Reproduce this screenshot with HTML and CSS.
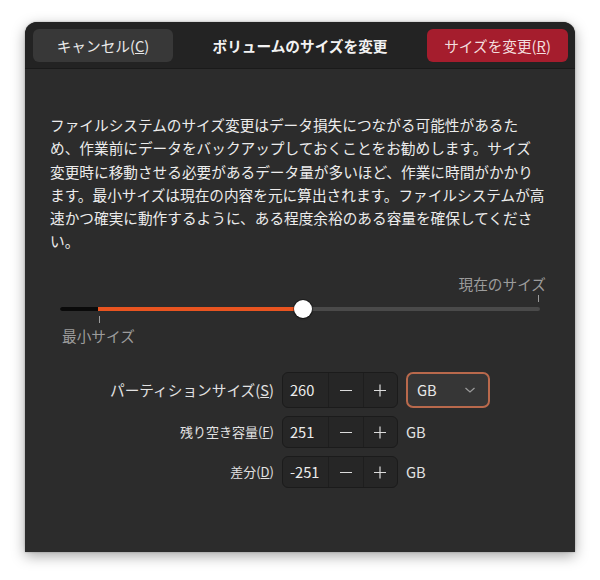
FILE: index.html
```html
<!DOCTYPE html>
<html lang="ja">
<head>
<meta charset="utf-8">
<title>ボリュームのサイズを変更</title>
<link rel="stylesheet" href="styles.css">
</head>
<body>
<div class="window">
  <header class="headerbar">
    <button class="btn btn-cancel">キャンセル(<u>C</u>)</button>
    <div class="title">ボリュームのサイズを変更</div>
    <button class="btn btn-destructive">サイズを変更(<u>R</u>)</button>
  </header>
  <main class="content">
    <p class="desc">ファイルシステムのサイズ変更はデータ損失につながる可能性があるた<br>め、作業前にデータをバックアップしておくことをお勧めします。サイズ<br>変更時に移動させる必要があるデータ量が多いほど、作業に時間がかかり<br>ます。最小サイズは現在の内容を元に算出されます。ファイルシステムが高<br>速かつ確実に動作するように、ある程度余裕のある容量を確保してくださ<br>い。</p>

    <div class="scale">
      <span class="mark-label mark-top">現在のサイズ</span>
      <span class="tick tick-top"></span>
      <div class="track">
        <div class="seg seg-min" style="width:38px"></div>
        <div class="seg seg-fill" style="width:205px"></div>
      </div>
      <span class="knob"></span>
      <span class="tick tick-bottom"></span>
      <span class="mark-label mark-bottom">最小サイズ</span>
    </div>

    <div class="form">
      <label class="lbl lbl-main">パーティションサイズ(<u>S</u>)</label>
      <div class="spin">
        <span class="spin-value">260</span>
        <span class="spin-btn"><svg width="14" height="14" viewBox="0 0 14 14"><path d="M1 7.5h12" stroke="#dcdcdc" stroke-width="1.2"/></svg></span>
        <span class="spin-btn"><svg width="14" height="14" viewBox="0 0 14 14"><path d="M1 7.5h12M7 1.5v12" stroke="#dcdcdc" stroke-width="1.2"/></svg></span>
      </div>
      <div class="dropdown">
        <span>GB</span>
        <svg width="12" height="8" viewBox="0 0 12 8"><path d="M1.5 2l4.5 4 4.5-4" fill="none" stroke="#9a9a9a" stroke-width="1.3"/></svg>
      </div>

      <label class="lbl">残り空き容量(<u>F</u>)</label>
      <div class="spin">
        <span class="spin-value">251</span>
        <span class="spin-btn"><svg width="14" height="14" viewBox="0 0 14 14"><path d="M1 7.5h12" stroke="#dcdcdc" stroke-width="1.2"/></svg></span>
        <span class="spin-btn"><svg width="14" height="14" viewBox="0 0 14 14"><path d="M1 7.5h12M7 1.5v12" stroke="#dcdcdc" stroke-width="1.2"/></svg></span>
      </div>
      <span class="unit">GB</span>

      <label class="lbl">差分(<u>D</u>)</label>
      <div class="spin">
        <span class="spin-value">-251</span>
        <span class="spin-btn"><svg width="14" height="14" viewBox="0 0 14 14"><path d="M1 7.5h12" stroke="#dcdcdc" stroke-width="1.2"/></svg></span>
        <span class="spin-btn"><svg width="14" height="14" viewBox="0 0 14 14"><path d="M1 7.5h12M7 1.5v12" stroke="#dcdcdc" stroke-width="1.2"/></svg></span>
      </div>
      <span class="unit">GB</span>
    </div>
  </main>
</div>
</body>
</html>
```
FILE: styles.css
```css
* { box-sizing: border-box; }

html, body {
  margin: 0;
  padding: 0;
  background: #ffffff;
  width: 600px;
  height: 580px;
  overflow: hidden;
}

body {
  font-family: "Noto Sans CJK JP", "Noto Sans", sans-serif;
  color: #e6e6e6;
  font-size: 14.67px;
}

.window {
  margin: 22px 0 0 25px;
  width: 550px;
  height: 530px;
  background: #2c2c2c;
  border-radius: 12px 12px 0 0;
  box-shadow: 0 4px 14px rgba(0, 0, 0, 0.35), 0 0 2px rgba(0, 0, 0, 0.3);
  display: flex;
  flex-direction: column;
  overflow: hidden;
}

.headerbar {
  height: 47px;
  flex: none;
  background: #232323;
  border-bottom: 1px solid #1a1a1a;
  display: flex;
  align-items: center;
  justify-content: space-between;
  padding: 0 7px 0 8px;
}

.btn {
  height: 33px;
  border: none;
  border-radius: 6px;
  font-family: inherit;
  font-size: 14.67px;
  padding: 0;
  line-height: 33px;
}

.btn-cancel {
  width: 140px;
  background: #383838;
  color: #e8e8e8;
}

.btn-destructive {
  width: 141px;
  background: #a51d2d;
  color: #f3dede;
}

.title {
  font-weight: 700;
  font-size: 14.67px;
  color: #f2f2f2;
}

.content {
  padding: 44px 25px 0 25px;
}

.desc {
  margin: 0;
  line-height: 23.3px;
  white-space: nowrap;
  color: #ececec;
}

.scale {
  position: relative;
  margin-top: 17px;
  height: 80px;
}

.mark-label {
  position: absolute;
  line-height: 20px;
  color: #9c9c9c;
  white-space: nowrap;
}

.mark-top { right: 4px; top: 4px; }
.mark-bottom { left: 12px; top: 56px; }

.tick {
  position: absolute;
  width: 1px;
  height: 7px;
  background: #9c9c9c;
}

.tick-top { left: 488px; top: 25px; }
.tick-bottom { left: 49px; top: 46px; }

.track {
  position: absolute;
  left: 10px;
  top: 37px;
  width: 480px;
  height: 4px;
  border-radius: 2px;
  background: #4a4a4a;
  display: flex;
  overflow: hidden;
}

.seg { height: 100%; }
.seg-min { background: #0a0a0a; }
.seg-fill { background: #e95420; }

.knob {
  position: absolute;
  left: 244px;
  top: 30px;
  width: 18px;
  height: 18px;
  border-radius: 50%;
  background: #ffffff;
  box-shadow: 0 0 0 1px rgba(0, 0, 0, 0.35), 0 1px 2px rgba(0, 0, 0, 0.4);
}

.form {
  margin-top: 22px;
  display: grid;
  grid-template-columns: auto 116px auto;
  grid-auto-rows: auto;
  column-gap: 8px;
  row-gap: 8px;
  justify-content: center;
  align-items: stretch;
}

.lbl {
  font-size: 13px;
  color: #e2e2e2;
  text-align: right;
  align-self: center;
  white-space: nowrap;
}

.lbl-main { font-size: 14.67px; }

.spin {
  display: flex;
  min-height: 32px;
  background: #262626;
  border: 1px solid #1b1b1b;
  border-radius: 6px;
  overflow: hidden;
}

.spin-value {
  width: 45px;
  flex: none;
  display: flex;
  align-items: center;
  padding-left: 7px;
  color: #ececec;
  font-size: 14.67px;
}

.spin-btn {
  width: 35px;
  flex: none;
  border-left: 1px solid #1e1e1e;
  display: flex;
  align-items: center;
  justify-content: center;
}

.spin-btn:last-child { width: 34px; }

.dropdown {
  width: 84px;
  height: 36px;
  border: 2px solid #b9694c;
  border-radius: 7px;
  background: #363636;
  display: flex;
  align-items: center;
  justify-content: space-between;
  padding: 0 12px 0 9px;
  color: #e8e8e8;
}

.unit {
  align-self: center;
  color: #e2e2e2;
  line-height: 20px;
}
```
